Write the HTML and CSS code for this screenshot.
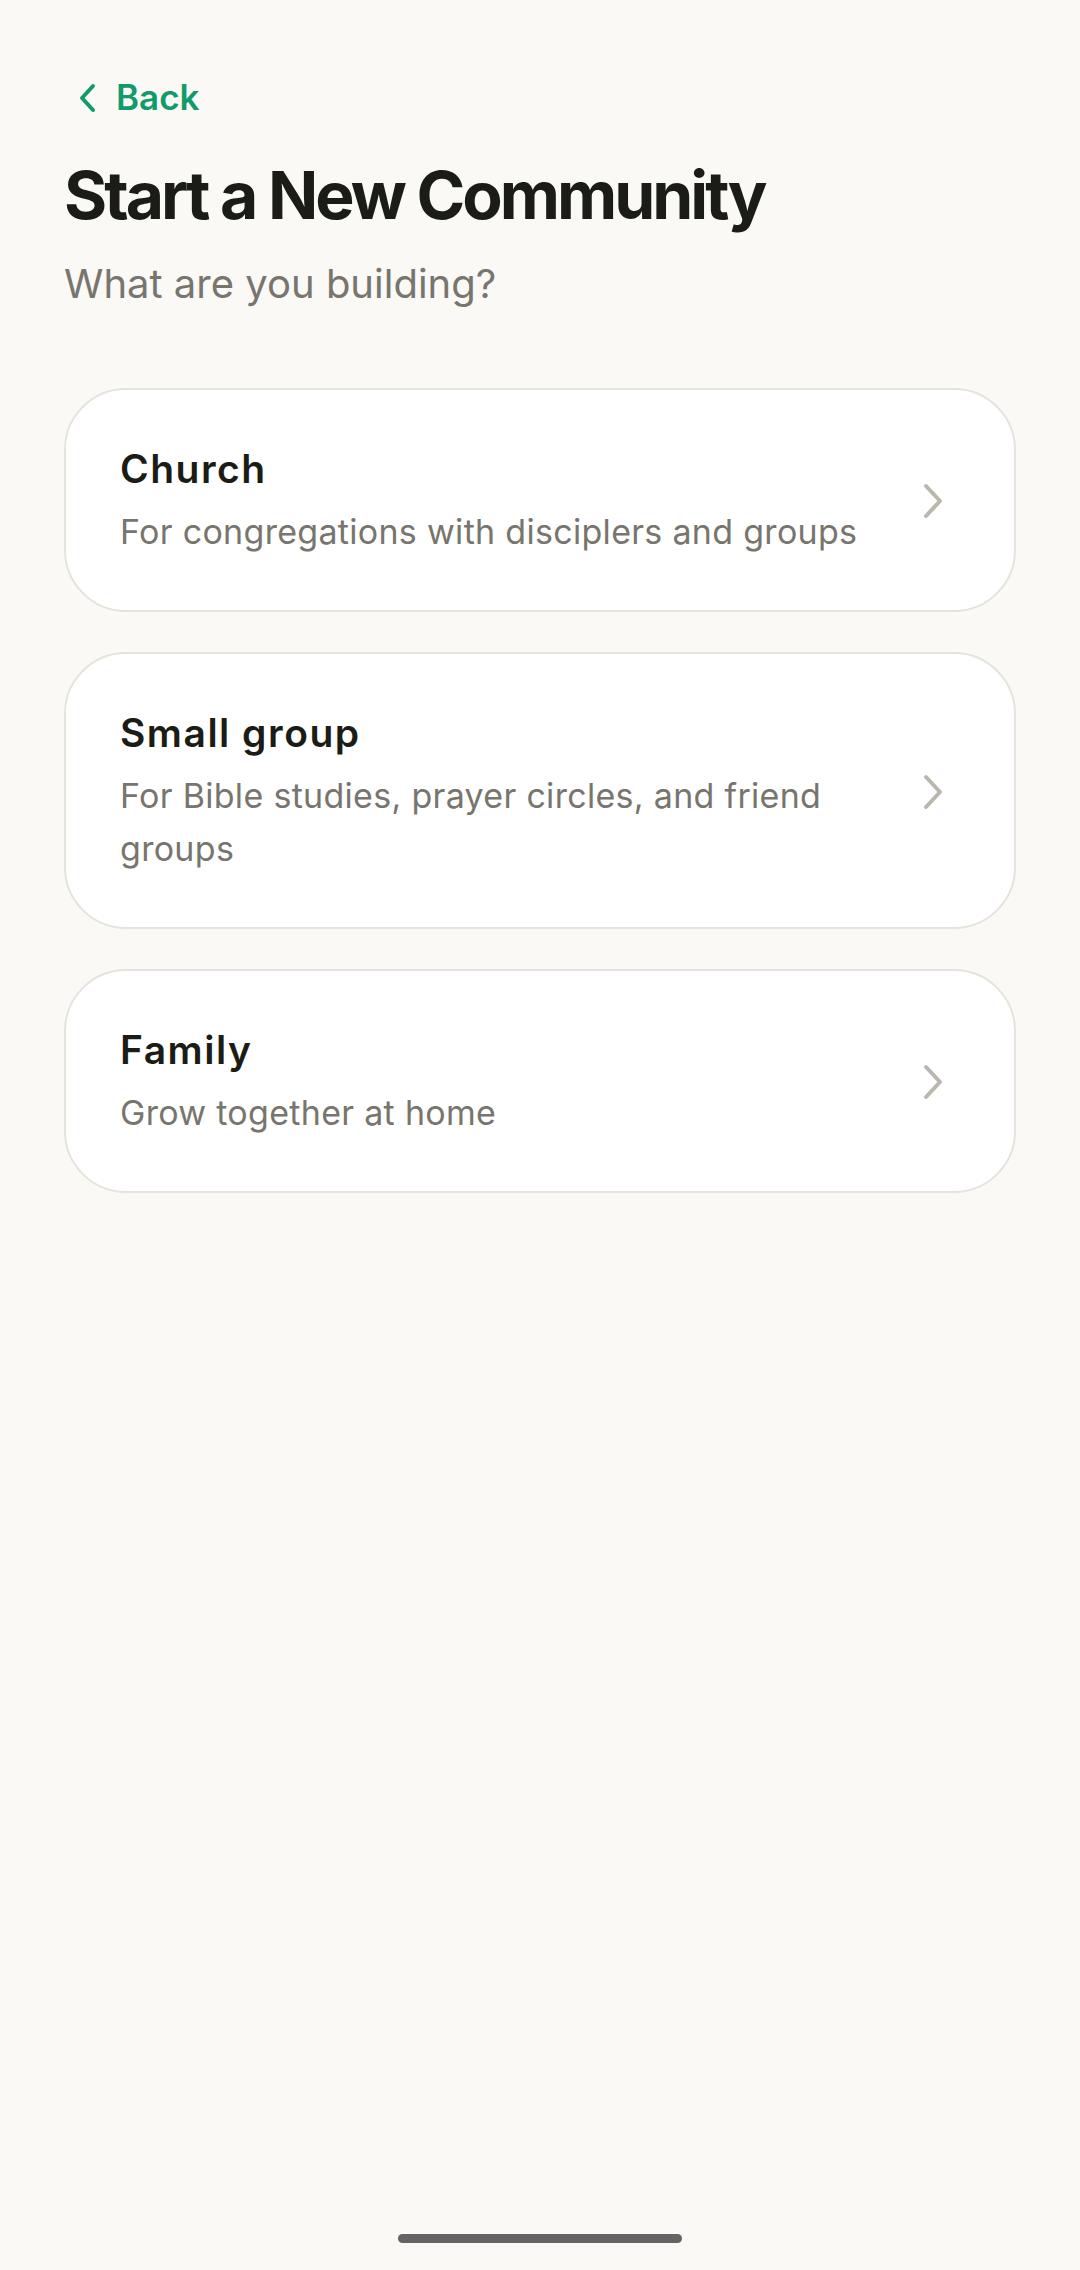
FILE: index.html
```html
<!DOCTYPE html>
<html lang="en">
<head>
    <meta charset="UTF-8">
    <meta name="viewport" content="width=device-width, initial-scale=1.0">
    <title>Start a New Community</title>
    <link rel="stylesheet" href="styles.css">
</head>
<body>
    <div class="screen">
        <a href="#" class="back">
            <svg class="back-icon" width="18" height="30" viewBox="0 0 18 30">
                <polyline points="15,3 4,15 15,27" fill="none" stroke="currentColor" stroke-width="4" stroke-linecap="round" stroke-linejoin="round"/>
            </svg>
            Back
        </a>

        <h1 class="title">Start a New Community</h1>
        <p class="subtitle">What are you building?</p>

        <div class="options">
            <a href="#" class="option">
                <div class="option-text">
                    <div class="option-name">Church</div>
                    <div class="option-desc">For congregations with disciplers and groups</div>
                </div>
                <svg class="chevron" width="22" height="36" viewBox="0 0 22 36">
                    <polyline points="4,3 18,18 4,33" fill="none" stroke="currentColor" stroke-width="4" stroke-linecap="round" stroke-linejoin="round"/>
                </svg>
            </a>
            <a href="#" class="option">
                <div class="option-text">
                    <div class="option-name">Small group</div>
                    <div class="option-desc">For Bible studies, prayer circles, and friend groups</div>
                </div>
                <svg class="chevron" width="22" height="36" viewBox="0 0 22 36">
                    <polyline points="4,3 18,18 4,33" fill="none" stroke="currentColor" stroke-width="4" stroke-linecap="round" stroke-linejoin="round"/>
                </svg>
            </a>
            <a href="#" class="option">
                <div class="option-text">
                    <div class="option-name">Family</div>
                    <div class="option-desc">Grow together at home</div>
                </div>
                <svg class="chevron" width="22" height="36" viewBox="0 0 22 36">
                    <polyline points="4,3 18,18 4,33" fill="none" stroke="currentColor" stroke-width="4" stroke-linecap="round" stroke-linejoin="round"/>
                </svg>
            </a>
        </div>

        <div class="home-bar"></div>
    </div>
</body>
</html>
```

FILE: styles.css
```css
body {
    margin: 0;
    background: #faf9f6;
    font-family: Inter, "Noto Sans", sans-serif;
    color: #1c1c17;
}
.screen {
    position: relative;
    min-height: 2270px;
    box-sizing: border-box;
    padding: 77px 64px 0;
}
.back {
    display: inline-flex;
    align-items: center;
    gap: 20px;
    margin-left: 14px;
    color: #119a6b;
    font-size: 35px;
    font-weight: 600;
    line-height: 41px;
    text-decoration: none;
}
.title {
    margin: 38px 0 0;
    font-size: 66px;
    font-weight: 700;
    line-height: 79px;
    letter-spacing: -3px;
}
.subtitle {
    margin: 24px 0 0;
    font-size: 40px;
    line-height: 50px;
    color: #77756d;
}
.options {
    display: flex;
    flex-direction: column;
    gap: 40px;
    margin-top: 79px;
}
.option {
    display: flex;
    align-items: center;
    gap: 36px;
    padding: 54px 70px 52px 54px;
    background: #fff;
    border: 2px solid #e5e3dc;
    border-radius: 62px;
    text-decoration: none;
    color: inherit;
}
.option-text { flex: 1; }
.option-name {
    font-size: 39px;
    font-weight: 600;
    line-height: 49px;
    letter-spacing: 1.5px;
}
.option-desc {
    margin-top: 12px;
    font-size: 34px;
    line-height: 53px;
    letter-spacing: 0.3px;
    color: #77756e;
}
.chevron { color: #b9b7ae; flex-shrink: 0; }
.home-bar {
    position: absolute;
    left: 398px;
    bottom: 27px;
    width: 284px;
    height: 9px;
    border-radius: 5px;
    background: #646464;
}
```
